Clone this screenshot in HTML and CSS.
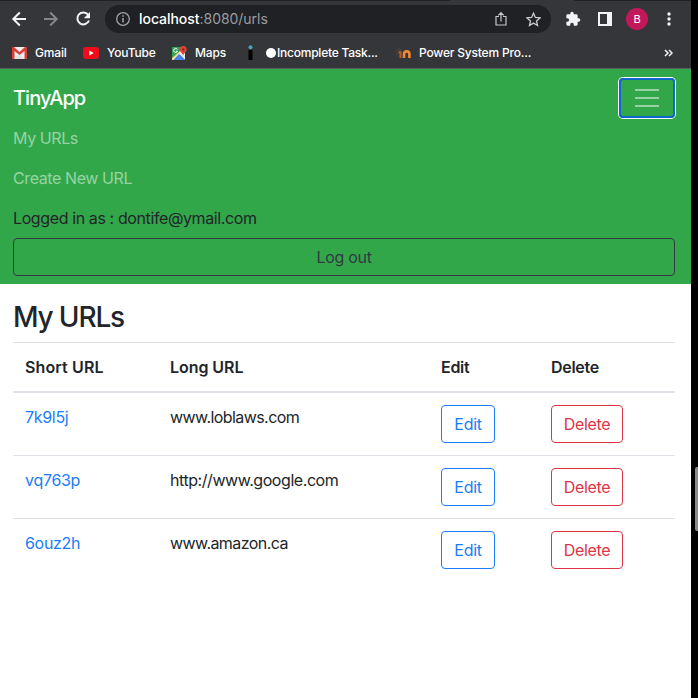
FILE: index.html
```html
<!DOCTYPE html>
<html lang="en">
<head>
<meta charset="utf-8">
<title>TinyApp</title>
<link rel="stylesheet" href="styles.css">
</head>
<body>
<div class="window">
  <header class="chrome">
    <div class="tabstrip"><span class="tab"></span></div>
    <div class="toolbar">
      <svg class="nav-icons" width="84" height="28" viewBox="0 0 84 28" fill="none" stroke-width="2">
        <path d="M15 14H2.500M8.800 7.500L2.300 14l6.500 6.500" stroke="#f1f3f4"/>
        <path d="M33 14h12.500M39.200 7.500l6.500 6.500-6.500 6.500" stroke="#85868a"/>
        <path d="M77.100 9.700A6 6 0 1 0 78 15.500" stroke="#f1f3f4"/>
        <path d="M79 7v6.200h-6.200z" fill="#f1f3f4"/>
      </svg>
      <div class="address">
        <svg width="14" height="14" viewBox="0 0 14 14" fill="none" stroke="#a0a3a7"><circle cx="7" cy="7" r="6.300" stroke-width="1.300"/><path d="M7 6v4.500M7 3.300v1.500" stroke-width="1.500"/></svg>
        <span class="url"><b>localhost</b>:8080/urls</span>
        <svg class="share" width="12" height="16" viewBox="0 0 12 16" fill="none" stroke="#c4c6c9" stroke-width="1.200"><path d="M4 5.500H1v8.500h10V5.500H8M6 10.500V2M3.300 4.300L6 1.600l2.700 2.700"/></svg>
        <svg class="star" width="15" height="15" viewBox="0 0 15 15" fill="none" stroke="#c9cbce" stroke-width="1.300"><path d="M7.500 1.200l1.900 4.300 4.600.4-3.500 3.100 1 4.500-4-2.400-4 2.400 1-4.500L1 5.900l4.600-.4z"/></svg>
      </div>
      <svg class="puzzle" width="16" height="16" viewBox="0 0 24 24" fill="#f1f3f4"><path d="M20.500 11H19V7c0-1.100-.9-2-2-2h-4V3.500a2.500 2.500 0 0 0-5 0V5H4c-1.100 0-2 .9-2 2v3.800h1.500a2.700 2.700 0 0 1 0 5.400H2V20c0 1.100.9 2 2 2h3.800v-1.500a2.700 2.700 0 0 1 5.400 0V22H17c1.100 0 2-.9 2-2v-4h1.500a2.500 2.500 0 0 0 0-5z"/></svg>
      <svg class="panel" width="14" height="14" viewBox="0 0 14 14"><path fill="#f1f3f4" fill-rule="evenodd" d="M0 0h14v14H0zM2 2v10h7V2z"/></svg>
      <span class="avatar">B</span>
      <svg class="dots" width="4" height="14" viewBox="0 0 4 14" fill="#f1f3f4"><circle cx="2" cy="2" r="1.700"/><circle cx="2" cy="7" r="1.700"/><circle cx="2" cy="12" r="1.700"/></svg>
    </div>
    <div class="bookmarks">
      <a class="bm gmail"><svg width="15" height="12" viewBox="0 0 15 12"><path fill="#eee" d="M0 0h15v12H0z"/><path fill="#e0e0e0" d="M3 12l4.500-5 4.500 5z"/><path fill="#d93f35" d="M0 0h2l5.500 5L13 0h2v12h-2.500V4L7.500 8 2.500 4v8H0z"/></svg><span>Gmail</span></a>
      <a class="bm youtube"><svg width="16" height="12" viewBox="0 0 16 12"><rect width="16" height="12" rx="3" fill="#f00c18"/><path fill="#fff" d="M6.300 3.500v5l4.400-2.500z"/></svg><span>YouTube</span></a>
      <a class="bm maps"><svg width="15" height="16" viewBox="0 0 15 16"><path fill="#34a15b" d="M0 2h11L1 14.500H0z"/><path fill="#f5c83a" d="M9 5l3 2-10 8H0v-2z"/><path fill="#e8eaed" d="M10 5l3 2v8L7 9 1 15l-1-1z"/><path fill="#4383ef" d="M7 9l6 6H1.500z"/><path d="M5.300 4.300a2 2 0 1 0 .2 2H4" fill="none" stroke="#fff"/><path fill="#dc4437" d="M11.200 1a3.500 3.500 0 0 1 3.500 3.500c0 2.500-2.700 3-3.500 6-.8-3-3.500-3.500-3.500-6A3.500 3.500 0 0 1 11.200 1z"/><circle cx="11.200" cy="4.500" r="1.200" fill="#8c2820"/></svg><span>Maps</span></a>
      <a class="bm task"><svg width="5" height="15" viewBox="0 0 5 15"><path d="M.5 5h4v10h-4z"/><circle cx="2.500" cy="2.200" r="2" fill="#44a6b5"/></svg><i class="blob"></i><span>Incomplete Task...</span></a>
      <a class="bm power"><svg width="16" height="12" viewBox="0 0 16 12" fill="none"><path d="M.5 4.500l3.500-2.500 2 1" stroke="#49413e" stroke-width="1.500"/><path d="M2 5v3" stroke="#4d423c" stroke-width="1.500"/><path d="M3.500 5.200h2V11" stroke="#b5622a" stroke-width="2"/><path d="M9 11V7q0-2.600 2.700-2.600T14.400 7v4" stroke="#f18a31" stroke-width="2.600"/></svg><span>Power System Pro...</span></a>
      <svg class="more" width="9" height="8" viewBox="0 0 9 8" fill="none" stroke="#f1f3f4" stroke-width="1.500"><path d="M1 1l3 3-3 3M5 1l3 3-3 3"/></svg>
    </div>
  </header>

  <nav class="navbar">
    <div class="navtop">
      <a class="brand">TinyApp</a>
      <button class="toggler" aria-label="Toggle navigation"><svg width="30" height="30" viewBox="0 0 30 30" stroke="#99d1a5" stroke-width="2"><path d="M3 7h24M3 15h24M3 23h24"/></svg></button>
    </div>
    <a class="navlink mine">My URLs</a>
    <a class="navlink create">Create New URL</a>
    <p class="user">Logged in as : dontife@ymail.com</p>
    <button class="btn logout"><span>Log out</span></button>
  </nav>

  <main class="page">
    <h3>My URLs</h3>
    <div class="table">
      <div class="row head"><b class="th-short">Short URL</b><b class="th-long">Long URL</b><b>Edit</b><b>Delete</b></div>
      <div class="row"><a>7k9l5j</a><span class="bare">www.loblaws.com</span><button class="btn edit">Edit</button><button class="btn delete">Delete</button></div>
      <div class="row"><a>vq763p</a><span>http://www.google.com</span><button class="btn edit">Edit</button><button class="btn delete">Delete</button></div>
      <div class="row"><a>6ouz2h</a><span class="bare">www.amazon.ca</span><button class="btn edit">Edit</button><button class="btn delete">Delete</button></div>
    </div>
  </main>
</div>
<aside class="edge"><span class="thumb"></span></aside>
</body>
</html>
```

FILE: styles.css
```css
* { box-sizing: border-box; }
body {
  margin: 0; height: 698px; display: flex; overflow: hidden; background: #000;
  font: 16px/24px Inter, "Liberation Sans", sans-serif; color: #212529; letter-spacing: -0.3px;
}
svg { display: block; flex: none; }
.window { width: 691px; height: 698px; background: #fff; }
.edge { width: 7px; padding: 467px 0 0 4px; }
.thumb { display: block; width: 3px; height: 64px; background: #8a8a8a; border-radius: 2px 0 0 2px; }

.chrome { height: 69px; background: #35363a; border-bottom: 1px solid #5b5c60; }
.tabstrip { height: 1px; background: #202124; display: flex; padding-left: 450px; }
.tab { width: 124px; background: #35363a; }
.toolbar { height: 36px; display: flex; align-items: center; padding: 0 19px 0 11px; }
.nav-icons { margin-right: 10px; }
.address {
  width: 446px; height: 28px; border-radius: 14px; background: #202124;
  display: flex; align-items: center; padding: 0 10px 0 11px; margin-right: 14px;
}
.url { margin-left: 9px; font-size: 14px; line-height: 20px; letter-spacing: -0.04px; color: #9a9da1; }
.url b { font-weight: 500; color: #fff; }
.share { margin-left: auto; margin-right: 19px; }
.puzzle { margin-right: 17px; }
.panel { margin-right: 14px; }
.avatar {
  width: 22px; height: 22px; border-radius: 50%; background: #c2185b; color: #fff;
  font-size: 11px; line-height: 22px; text-align: center; letter-spacing: 0; margin-right: 19px;
}
.bookmarks { height: 31px; display: flex; align-items: center; padding: 0 18px 0 12px; color: #fff; font-size: 12px; line-height: 16px; font-weight: 500; letter-spacing: -0.15px; }
.bm { display: flex; align-items: center; white-space: nowrap; }
.gmail { width: 71px; gap: 8px; }
.youtube { width: 89px; gap: 8px; }
.maps { width: 76px; gap: 8px; }
.task { width: 147px; letter-spacing: -0.23px; }
.power { gap: 8px; letter-spacing: -0.18px; }
.blob { width: 10px; height: 10px; border-radius: 50%; background: #fff; margin: 0 1px 0 13px; }
.more { margin-left: auto; }

.navbar { height: 215px; background: #31a74a; padding: 8px 16px 8px 13px; }
.navtop { height: 42px; display: flex; align-items: center; justify-content: space-between; }
.brand { color: #fff; font-size: 20px; line-height: 30px; font-weight: 500; letter-spacing: -0.95px; }
.toggler {
  width: 56px; height: 40px; padding: 0; margin-right: 0; background: none;
  border: 2px solid #1066c9; border-radius: 4px; box-shadow: 0 0 0 1px #fff;
  display: flex; align-items: center; justify-content: center;
}
.navlink { display: block; padding: 8px 0; color: #98d3a4; letter-spacing: -0.4px; }
.mine { margin-top: -1px; }
.user { margin: 8px 0; letter-spacing: -0.39px; }
.btn { font: inherit; letter-spacing: inherit; height: 38px; border: 1px solid; border-radius: 4px; background: none; padding: 0; }
.logout { width: 100%; color: #343a40; }

.page { padding: 16px 16px 0 13px; }
h3 { margin: 0 0 8px; font-size: 28px; line-height: 34px; font-weight: 500; letter-spacing: -1.15px; }
.row { display: grid; grid-template-columns: 145px 271px 110px 1fr; align-items: start; padding: 12px 0 12px 12px; border-top: 1px solid #dee2e6; }
.row span { letter-spacing: -0.44px; }
.row .bare { letter-spacing: -0.57px; }
.head { border-bottom: 2px solid #dee2e6; }
.head + .row { border-top: 0; }
.head b { font-weight: 600; }
.th-short { letter-spacing: 0.12px; }
.th-long { letter-spacing: -0.05px; }
.row a, .edit { color: #1a7dfb; }
.edit { width: 54px; }
.delete { width: 72px; color: #dc3545; }
```
